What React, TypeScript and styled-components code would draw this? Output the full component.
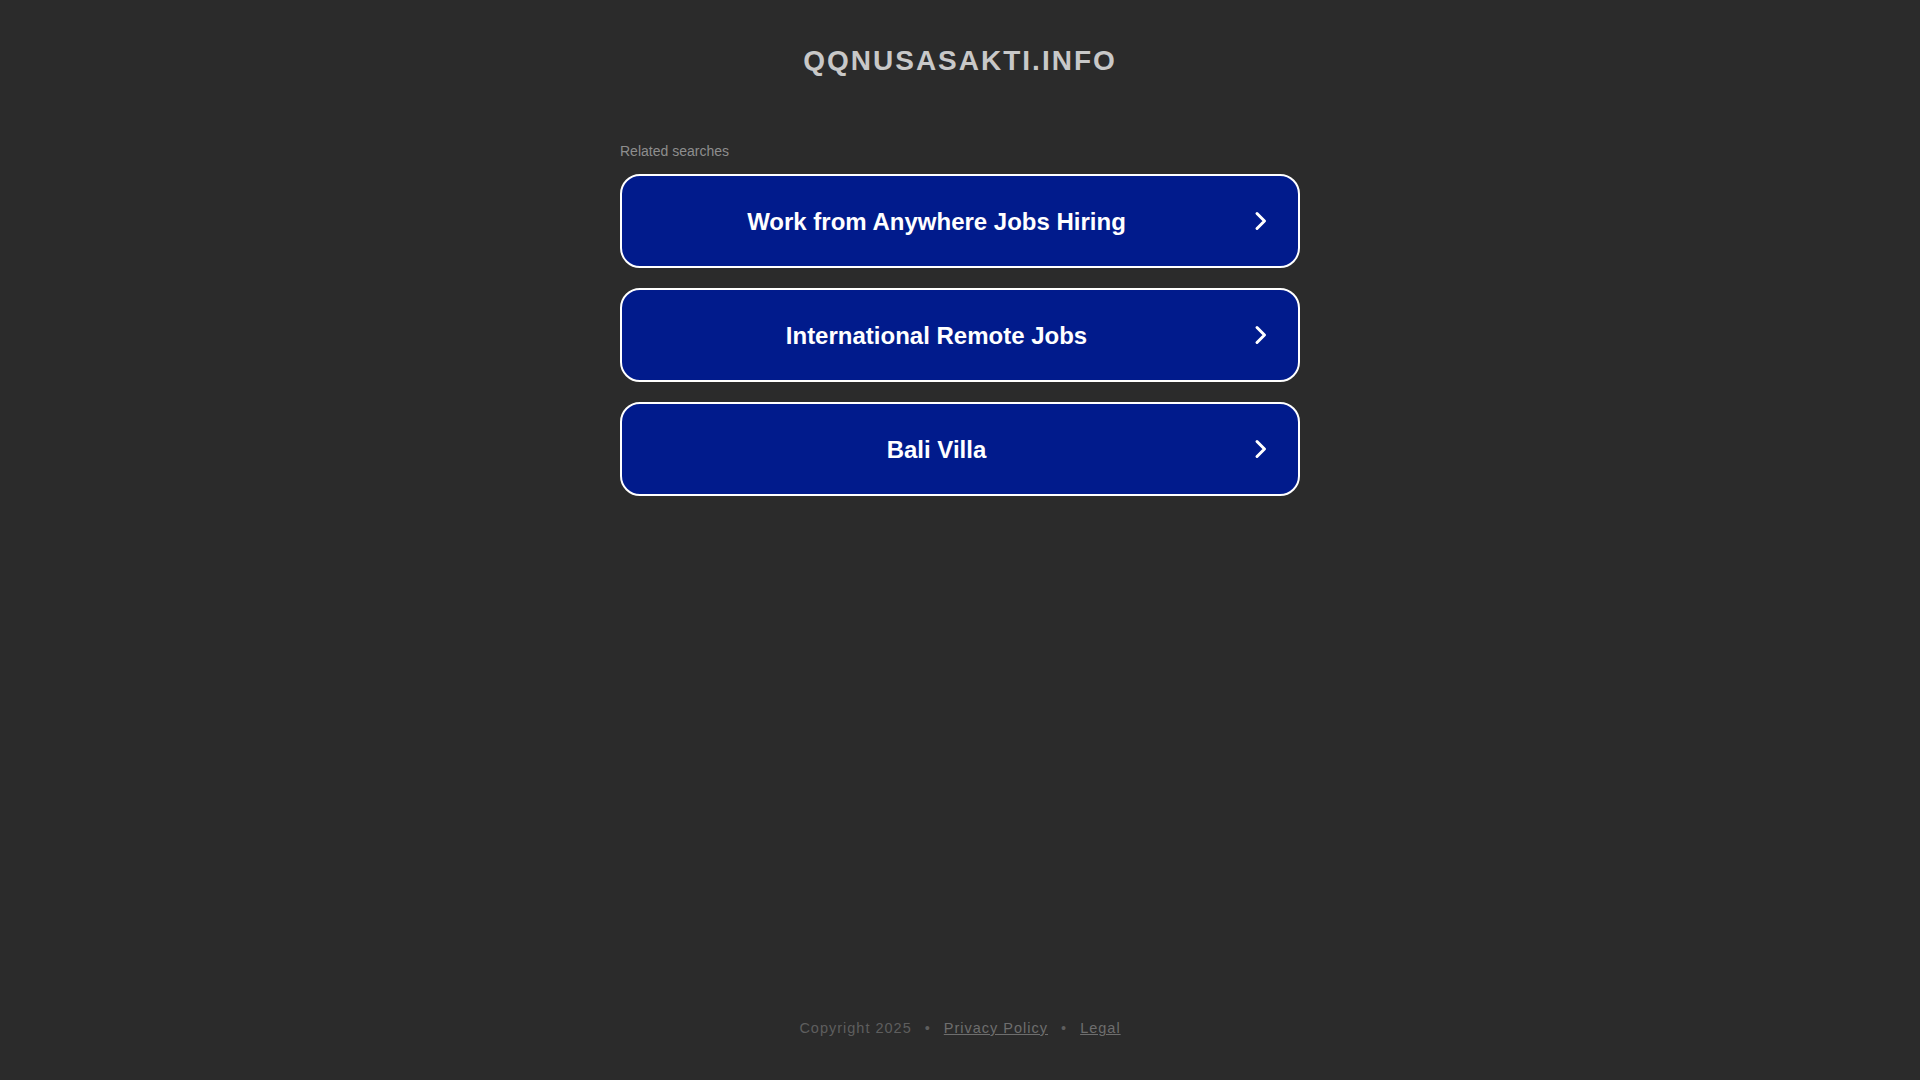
import React from 'react';
import styled, { createGlobalStyle } from 'styled-components';

const GlobalStyle = createGlobalStyle`
  html, body {
    margin: 0;
    padding: 0;
    background: #2b2b2b;
    font-family: "Liberation Sans", Arial, sans-serif;
  }
`;

const Page = styled.div`
  min-height: 100vh;
  display: flex;
  flex-direction: column;
  align-items: center;
`;

const Title = styled.h1`
  margin: 44px 0 0;
  font-size: 28px;
  line-height: 34px;
  font-weight: bold;
  letter-spacing: 2px;
  color: #c8c8c8;
  text-transform: uppercase;
`;

const Searches = styled.div`
  width: 680px;
  margin-top: 65px;
  display: flex;
  flex-direction: column;
`;

const Caption = styled.div`
  font-size: 14px;
  line-height: 16px;
  color: #8e8e8e;
  margin-bottom: 15px;
`;

const List = styled.div`
  display: flex;
  flex-direction: column;
  gap: 20px;
`;

const SearchLink = styled.a`
  box-sizing: border-box;
  height: 94px;
  display: flex;
  align-items: center;
  padding: 0 30px 0 20px;
  background: #011b8c;
  border: 2px solid #ffffff;
  border-radius: 20px;
  color: #ffffff;
  text-decoration: none;
  cursor: pointer;
`;

const LinkText = styled.span`
  flex: 1;
  text-align: center;
  font-size: 24px;
  font-weight: bold;
  padding-top: 2px;
`;

const Chevron = styled.svg`
  width: 14px;
  height: 20px;
  margin-left: 23px;
  flex-shrink: 0;
`;

const Footer = styled.footer`
  margin-top: auto;
  padding-bottom: 42px;
  font-size: 14.5px;
  line-height: 20px;
  letter-spacing: 1px;
  color: #5e5e5e;
  display: flex;
  gap: 13px;
`;

const FooterLink = styled.a`
  color: #6e6e6e;
  text-decoration: underline;
`;

const searches = ['Work from Anywhere Jobs Hiring', 'International Remote Jobs', 'Bali Villa'];

const App: React.FC = () => (
  <>
    <GlobalStyle />
    <Page>
      <Title>qqnusasakti.info</Title>
      <Searches>
        <Caption>Related searches</Caption>
        <List>
          {searches.map((s) => (
            <SearchLink key={s}>
              <LinkText>{s}</LinkText>
              <Chevron viewBox="0 0 14 20">
                <path d="M3 2.5 L10.5 10 L3 17.5" fill="none" stroke="#fff" strokeWidth="3" strokeLinecap="round" strokeLinejoin="round" />
              </Chevron>
            </SearchLink>
          ))}
        </List>
      </Searches>
      <Footer>
        <span>Copyright 2025</span>
        <span>•</span>
        <FooterLink>Privacy Policy</FooterLink>
        <span>•</span>
        <FooterLink>Legal</FooterLink>
      </Footer>
    </Page>
  </>
);

export default App;
